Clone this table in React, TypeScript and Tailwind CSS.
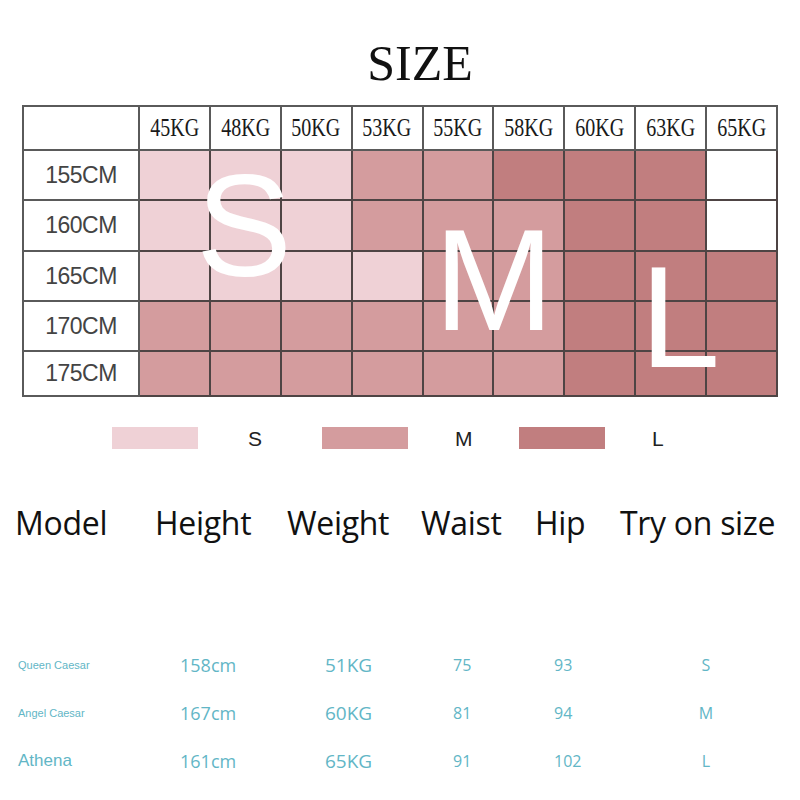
const weights = ["45KG", "48KG", "50KG", "53KG", "55KG", "58KG", "60KG", "63KG", "65KG"];

// one letter per weight column: S / M / L, "-" for an empty (white) cell
const rows = [
  { height: "155CM", cells: "SSSMMLLL-" },
  { height: "160CM", cells: "SSSMMMLL-" },
  { height: "165CM", cells: "SSSSMMLLL" },
  { height: "170CM", cells: "MMMMMMLLL" },
  { height: "175CM", cells: "MMMMMMLLL" },
];

const cellBg: Record<string, string> = {
  S: "bg-[#efd1d6]",
  M: "bg-[#d49c9e]",
  L: "bg-[#c17e7f]",
  "-": "bg-white",
};

const models = [
  { name: "Queen Caesar", nameSize: "text-[11px]", height: "158cm", weight: "51KG", waist: "75", hip: "93", size: "S" },
  { name: "Angel Caesar", nameSize: "text-[11px]", height: "167cm", weight: "60KG", waist: "81", hip: "94", size: "M" },
  { name: "Athena", nameSize: "text-[17px]", height: "161cm", weight: "65KG", waist: "91", hip: "102", size: "L" },
];

const heads = ["Model", "Height", "Weight", "Waist", "Hip", "Try on size"];

function SizeGrid() {
  return (
    <div className="relative ml-[22px] w-[756px]">
      <div className="grid grid-cols-[116px_repeat(9,minmax(0,1fr))] grid-rows-[44px_50px_51px_50px_50px_45px] border-l-2 border-t-2 border-[#5a5a5a]">
        <div className="border-r-2 border-b-2 border-[#5a5a5a] bg-white" />
        {weights.map((w) => (
          <div
            key={w}
            className="flex items-center justify-center border-r-2 border-b-2 border-[#5a5a5a] bg-white"
          >
            <span className="inline-block scale-x-[0.77] font-['Liberation_Serif',serif] text-[26px] leading-none text-[#1a1a1a]">
              {w}
            </span>
          </div>
        ))}
        {rows.map((r) => (
          <>
            <div
              key={r.height}
              className="flex items-center justify-center border-r-2 border-b-2 border-[#5a5a5a] bg-white font-['Liberation_Sans',sans-serif] text-[23px] tracking-[-0.5px] text-[#444]"
            >
              {r.height}
            </div>
            {r.cells.split("").map((c, i) => (
              <div
                key={r.height + i}
                className={`border-r-2 border-b-2 border-[#4e4444] ${cellBg[c]}`}
              />
            ))}
          </>
        ))}
      </div>

      {/* big letters laid over the grid */}
      <span className="absolute left-[174px] top-[50px] font-['Liberation_Sans',sans-serif] text-[144px] leading-none text-white">
        S
      </span>
      <span className="absolute left-[412px] top-[104px] font-['Liberation_Sans',sans-serif] text-[144px] leading-none text-white">
        M
      </span>
      <span className="absolute left-[618px] top-[141px] font-['Liberation_Sans',sans-serif] text-[144px] leading-none text-white">
        L
      </span>
    </div>
  );
}

function Legend() {
  return (
    <div className="mt-[30px] flex h-[22px] items-center pl-[112px] font-['Liberation_Sans',sans-serif] text-[21px] text-[#222]">
      <div className="h-[22px] w-[86px] bg-[#efd1d6]" />
      <div className="w-[124px] pl-[50px] leading-none">S</div>
      <div className="h-[22px] w-[86px] bg-[#d49c9e]" />
      <div className="w-[111px] pl-[47px] leading-none">M</div>
      <div className="h-[22px] w-[86px] bg-[#c17e7f]" />
      <div className="pl-[47px] leading-none">L</div>
    </div>
  );
}

function ModelTable() {
  return (
    <div>
      <div className="mt-[51px] grid h-[46px] grid-cols-[140px_132px_134px_114px_85px_1fr] items-center font-['Open_Sans',sans-serif] text-[32px] tracking-[-0.3px] text-[#111]">
        {heads.map((h) => (
          <div key={h} className="pl-[15px] leading-none">
            {h}
          </div>
        ))}
      </div>

      <div className="mt-[95px] pl-[18px] text-[#62b6c6]">
        {models.map((m) => (
          <div
            key={m.name}
            className="grid h-[48px] grid-cols-[162px_145px_128px_101px_142px_20px] items-center"
          >
            <div className={`font-['Liberation_Sans',sans-serif] ${m.nameSize}`}>{m.name}</div>
            <div className="font-['Open_Sans',sans-serif] text-[18px]">{m.height}</div>
            <div className="font-['Open_Sans',sans-serif] text-[19px]">{m.weight}</div>
            <div className="font-['Open_Sans',sans-serif] text-[16px]">{m.waist}</div>
            <div className="font-['Open_Sans',sans-serif] text-[16px]">{m.hip}</div>
            <div className="text-center font-['Open_Sans',sans-serif] text-[16px]">{m.size}</div>
          </div>
        ))}
      </div>
    </div>
  );
}

export default function App() {
  return (
    <div className="h-[800px] w-[800px] overflow-hidden bg-white">
      <h1 className="h-[88px] pl-[40px] pt-[38px] text-center font-['Liberation_Serif',serif] text-[50px] font-normal leading-none text-[#111]">
        SIZE
      </h1>
      <div className="mt-[17px]">
        <SizeGrid />
      </div>
      <Legend />
      <ModelTable />
    </div>
  );
}
